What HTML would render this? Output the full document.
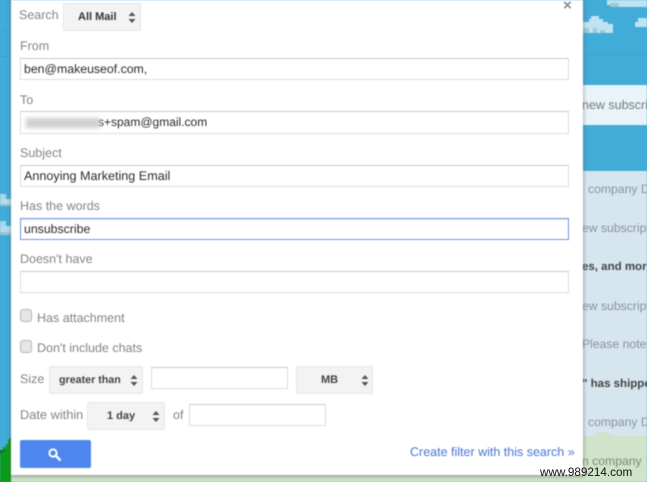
<!DOCTYPE html>
<html><head><meta charset="utf-8">
<style>
html,body{margin:0;padding:0;}
body{width:647px;height:482px;overflow:hidden;position:relative;background:#41acd8;font-family:"Liberation Sans",Arial,sans-serif;font-size:12px;}
#w{position:absolute;left:0;top:0;width:647px;height:482px;overflow:hidden;filter:blur(.4px);text-rendering:geometricPrecision;}
.a{position:absolute;}
.l{position:absolute;color:#848484;font-size:12.5px;line-height:14px;white-space:nowrap;}
.i{position:absolute;box-sizing:border-box;background:#fff;border:1px solid #dcdcdc;border-top-color:#c8c8c8;color:#2c2c2c;font-size:12.3px;line-height:20px;padding-left:3px;white-space:nowrap;}
.s{position:absolute;box-sizing:border-box;background:#f3f3f3;border:1px solid #e6e6e6;border-radius:2px;color:#444;font-weight:bold;font-size:11px;line-height:26px;white-space:nowrap;}
.s svg{position:absolute;top:8px;}
.b{position:absolute;color:#8b949a;font-size:12.2px;line-height:18px;white-space:nowrap;top:0;}
.r{position:absolute;left:583px;width:64px;height:18px;overflow:hidden;}
.c{position:absolute;box-sizing:border-box;left:20px;width:12px;height:13px;background:#e6e6e6;border:1px solid #b8b8b8;border-radius:3px;}
</style></head>
<body>
<div id="w">
<!-- background -->
<div class="a" style="left:0;top:30px;width:11px;height:1px;background:#3a9fc8"></div>
<div class="a" style="left:0;top:56px;width:11px;height:1px;background:#3a9fc8"></div>
<div class="a" style="left:0;top:194px;width:6px;height:6px;background:#a8d6e8"></div>
<div class="a" style="left:0;top:199px;width:11px;height:6px;background:#b5dcec"></div>
<div class="a" style="left:0;top:204px;width:11px;height:2px;background:#9cc4d4"></div>
<div class="a" style="left:0;top:221px;width:6px;height:6px;background:#a8d6e8"></div>
<div class="a" style="left:0;top:226px;width:11px;height:6px;background:#b5dcec"></div>
<div class="a" style="left:0;top:232px;width:11px;height:3px;background:#9cc4d4"></div>
<svg class="a" style="left:0;top:436px" width="12" height="46"><path d="M0 14L3 14 3 11 6 11 6 8 8 8 8 4 12 0 12 46 0 46Z" fill="#0d9a1c"/><path d="M0 18L3 16 6 14 0 14Z" fill="#0a6e14"/></svg>
<div class="a" style="left:11px;top:474px;width:636px;height:8px;background:#cfe4c9"></div>

<!-- right strip -->
<div class="a" style="left:583px;top:85px;width:64px;height:40px;background:#e9f4fa"></div>
<div class="a" style="left:583px;top:54px;width:64px;height:1px;background:#3d9fc8"></div>
<div class="a" style="left:583px;top:171px;width:64px;height:311px;background:#d6e6ef"></div>
<div class="a" style="left:583px;top:436px;width:64px;height:46px;background:#cfe4c9"></div>
<svg class="a" style="left:583px;top:0" width="64" height="40">
<path d="M0 22H6V19H8V16H16V19H20V22H25V24H30V33H0Z" fill="#bfe3f0"/>
<path d="M0 28H6V33H0ZM10 28H14V33H10ZM17 30H22V33H17Z" fill="#9cc8d8"/>
<path d="M24 0H64V7H32V5H24Z" fill="#bfe3f0"/>
<path d="M27 3H36V7H27Z" fill="#9cc8d8"/>
<path d="M52 22H55V18H64V27H52Z" fill="#bfe3f0"/>
</svg>
<svg class="a" style="left:583px;top:430px" width="64" height="12"><path d="M0 7L10 7 13 3 22 2 30 5 36 8 48 8 64 6 64 12 0 12Z" fill="#cfe4c9"/></svg>
<div class="r" style="top:96px"><span class="b" style="left:-1px;color:#777;font-size:12.5px">new subscriptions</span></div>
<div class="r" style="top:180px"><span class="b" style="left:5px">company Digest</span></div>
<div class="r" style="top:219px"><span class="b" style="left:-1px">ew subscriptions</span></div>
<div class="r" style="top:258px"><span class="b" style="left:-1px;color:#444;font-weight:bold;font-size:11.5px">es, and more</span></div>
<div class="r" style="top:297px"><span class="b" style="left:-1px">ew subscriptions</span></div>
<div class="r" style="top:335px"><span class="b" style="left:-1px">Please note</span></div>
<div class="r" style="top:375px"><span class="b" style="left:-1px;color:#444;font-weight:bold;font-size:11.5px">" has shipped</span></div>
<div class="r" style="top:413px"><span class="b" style="left:5px">company Digest</span></div>
<div class="r" style="top:452px"><span class="b" style="left:-1px;color:#7d8a7c">n company</span></div>

<!-- dialog -->
<div class="a" style="left:11px;top:-2px;width:572px;height:477px;background:#fff;box-shadow:0 1px 3px 1px rgba(90,90,90,.45)"></div>
<div class="a" style="left:563px;top:-1px;font-size:15px;line-height:14px;color:#888;font-weight:bold">×</div>

<div class="l" style="left:19px;top:8px">Search</div>
<div class="s" style="left:63px;top:3px;width:78px;height:28px;color:#333;font-size:11px;padding-left:14px;">All Mail<svg style="left:64px" width="8" height="11"><path d="M4 0L7.5 4H.5ZM4 11L7.5 7H.5Z" fill="#555"/></svg></div>

<div class="l" style="left:20px;top:39px">From</div>
<div class="i" style="left:20px;top:58px;width:549px;height:22px;padding-left:3px">ben@makeuseof.com,</div>

<div class="l" style="left:20px;top:93px">To</div>
<div class="i" style="left:20px;top:111px;width:549px;height:23px;padding-left:77px;font-size:12px">s+spam@gmail.com</div>
<div class="a" style="left:26px;top:118px;width:74px;height:10px;background:#cfcfcf;filter:blur(2px)"></div>

<div class="l" style="left:20px;top:146px">Subject</div>
<div class="i" style="left:20px;top:165px;width:549px;height:22px;font-size:12.6px">Annoying Marketing Email</div>

<div class="l" style="left:20px;top:199px">Has the words</div>
<div class="i" style="left:20px;top:218px;width:549px;height:22px;border:1px solid #6d98e0;box-shadow:inset 0 1px 1px rgba(0,0,0,.1);padding-left:3px">unsubscribe</div>

<div class="l" style="left:20px;top:252px">Doesn't have</div>
<div class="i" style="left:20px;top:271px;width:549px;height:22px"></div>

<div class="c" style="top:309px"></div>
<div class="l" style="left:37px;top:311px">Has attachment</div>
<div class="c" style="top:340px"></div>
<div class="l" style="left:37px;top:341px">Don't include chats</div>

<div class="l" style="left:20px;top:372px">Size</div>
<div class="s" style="left:49px;top:366px;width:94px;height:28px;font-size:10.7px;padding-left:9px;">greater than<svg style="left:80px" width="8" height="11"><path d="M4 0L7.5 4H.5ZM4 11L7.5 7H.5Z" fill="#555"/></svg></div>
<div class="i" style="left:151px;top:367px;width:137px;height:22px"></div>
<div class="s" style="left:296px;top:366px;width:77px;height:28px;padding-left:24px;">MB<svg style="left:64px" width="8" height="11"><path d="M4 0L7.5 4H.5ZM4 11L7.5 7H.5Z" fill="#555"/></svg></div>

<div class="l" style="left:20px;top:408px;font-size:12.8px">Date within</div>
<div class="s" style="left:87px;top:402px;width:78px;height:28px;padding-left:19px;">1 day<svg style="left:64px" width="8" height="11"><path d="M4 0L7.5 4H.5ZM4 11L7.5 7H.5Z" fill="#555"/></svg></div>
<div class="l" style="left:173px;top:408px">of</div>
<div class="i" style="left:189px;top:404px;width:137px;height:22px"></div>

<div class="a" style="left:20px;top:440px;width:71px;height:28px;background:#4d87ee;border-radius:2px"></div>
<svg class="a" style="left:47px;top:447px" width="16" height="16"><circle cx="6" cy="6" r="3.6" fill="none" stroke="#fff" stroke-width="2"/><path d="M9 9L13.5 13.5" stroke="#fff" stroke-width="2.4"/></svg>

<div class="a" style="left:410px;top:445px;font-size:12.5px;line-height:14px;color:#4a74d0;white-space:nowrap">Create filter with this search »</div>
</div>
<!-- watermark -->
<div class="a" style="left:540px;top:466px;font-size:11.7px;line-height:14px;color:#111;white-space:nowrap">www.989214.com</div>
</body></html>
